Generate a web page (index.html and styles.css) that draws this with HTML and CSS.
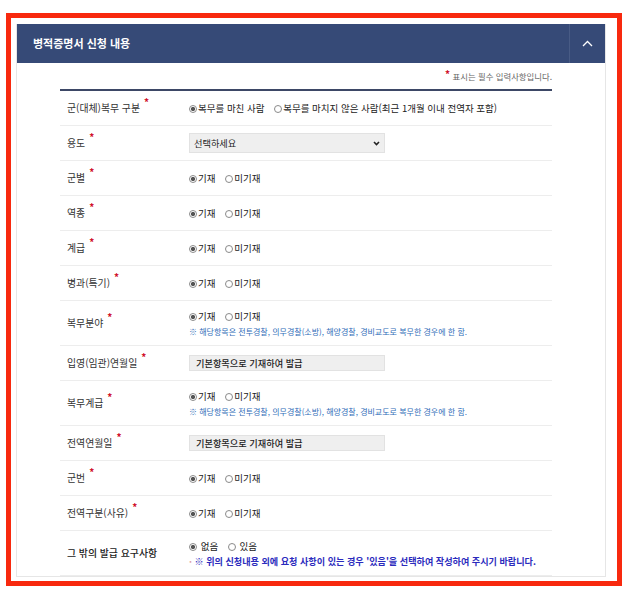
FILE: index.html
```html
<!DOCTYPE html>
<html lang="ko">
<head>
  <meta charset="UTF-8">
  <meta name="viewport" content="width=device-width, initial-scale=1.0">
  <title>병적증명서 신청 내용</title>
  <link rel="stylesheet" href="styles.css">
</head>
<body>
  <div class="frame">
    <section class="panel">
      <header class="panel-head">
        <h2>병적증명서 신청 내용</h2>
        <span class="toggle">
          <svg width="11" height="7" viewBox="0 0 11 7"><polyline points="1,6 5.5,1.5 10,6" fill="none" stroke="#fff" stroke-width="1.3"/></svg>
        </span>
      </header>

      <div class="panel-body">
        <p class="legend"><span class="req">*</span> 표시는 필수 입력사항입니다.</p>

        <div class="form">
          <div class="row">
            <div class="label">군(대체)복무 구분<span class="req">*</span></div>
            <div class="value">
              <span class="opt"><i class="radio on"></i>복무를 마친 사람</span>
              <span class="opt"><i class="radio"></i>복무를 마치지 않은 사람(최근 1개월 이내 전역자 포함)</span>
            </div>
          </div>
          <div class="row">
            <div class="label">용도<span class="req">*</span></div>
            <div class="value">
              <div class="select">
                <span>선택하세요</span>
                <svg width="7" height="5" viewBox="0 0 7 5"><polyline points="1,1 3.5,3.5 6,1" fill="none" stroke="#222" stroke-width="1.6"/></svg>
              </div>
            </div>
          </div>
          <div class="row">
            <div class="label">군별<span class="req">*</span></div>
            <div class="value">
              <span class="opt"><i class="radio on"></i>기재</span>
              <span class="opt"><i class="radio"></i>미기재</span>
            </div>
          </div>
          <div class="row">
            <div class="label">역종<span class="req">*</span></div>
            <div class="value">
              <span class="opt"><i class="radio on"></i>기재</span>
              <span class="opt"><i class="radio"></i>미기재</span>
            </div>
          </div>
          <div class="row">
            <div class="label">계급<span class="req">*</span></div>
            <div class="value">
              <span class="opt"><i class="radio on"></i>기재</span>
              <span class="opt"><i class="radio"></i>미기재</span>
            </div>
          </div>
          <div class="row">
            <div class="label">병과(특기)<span class="req">*</span></div>
            <div class="value">
              <span class="opt"><i class="radio on"></i>기재</span>
              <span class="opt"><i class="radio"></i>미기재</span>
            </div>
          </div>
          <div class="row">
            <div class="label">복무분야<span class="req">*</span></div>
            <div class="value">
              <span class="opt"><i class="radio on"></i>기재</span>
              <span class="opt"><i class="radio"></i>미기재</span>
              <p class="note">※ 해당항목은 전투경찰, 의무경찰(소방), 해양경찰, 경비교도로 복무한 경우에 한 함.</p>
            </div>
          </div>
          <div class="row">
            <div class="label">입영(임관)연월일<span class="req">*</span></div>
            <div class="value">
              <div class="field">기본항목으로 기재하여 발급</div>
            </div>
          </div>
          <div class="row">
            <div class="label">복무계급<span class="req">*</span></div>
            <div class="value">
              <span class="opt"><i class="radio on"></i>기재</span>
              <span class="opt"><i class="radio"></i>미기재</span>
              <p class="note">※ 해당항목은 전투경찰, 의무경찰(소방), 해양경찰, 경비교도로 복무한 경우에 한 함.</p>
            </div>
          </div>
          <div class="row">
            <div class="label">전역연월일<span class="req">*</span></div>
            <div class="value">
              <div class="field">기본항목으로 기재하여 발급</div>
            </div>
          </div>
          <div class="row">
            <div class="label">군번<span class="req">*</span></div>
            <div class="value">
              <span class="opt"><i class="radio on"></i>기재</span>
              <span class="opt"><i class="radio"></i>미기재</span>
            </div>
          </div>
          <div class="row">
            <div class="label">전역구분(사유)<span class="req">*</span></div>
            <div class="value">
              <span class="opt"><i class="radio on"></i>기재</span>
              <span class="opt"><i class="radio"></i>미기재</span>
            </div>
          </div>
          <div class="row">
            <div class="label strong">그 밖의 발급 요구사항</div>
            <div class="value">
              <span class="opt"><i class="radio on"></i> 없음</span>
              <span class="opt"><i class="radio"></i> 있음</span>
              <p class="note notice"><span class="dot">·</span> ※ 위의 신청내용 외에 요청 사항이 있는 경우 '있음'을 선택하여 작성하여 주시기 바랍니다.</p>
            </div>
          </div>
        </div>
      </div>
    </section>
  </div>
</body>
</html>
```

FILE: styles.css
```css
* {
  margin: 0;
  padding: 0;
  box-sizing: border-box;
}
body {
  background: #fff;
  font-family: "Noto Sans CJK KR", "Noto Sans", sans-serif;
  color: #333;
}
/* red highlight box around the panel */
.frame {
  width: 616px;
  height: 573px;
  margin: 13px 0 0 6px;
  border: 5px solid #f8290e;
  padding: 6px 0 0 5px;
  overflow: hidden;
}
.panel {
  width: 590px;
  border: 1px solid #e6e6e6;
  border-top: 0;
}
.panel-head {
  display: flex;
  height: 39px;
  background: #364a77;
}
.panel-head h2 {
  flex: 1;
  padding-left: 16px;
  font-size: 11px;
  line-height: 39px;
  font-weight: bold;
  color: #fff;
}
.toggle {
  width: 36px;
  display: flex;
  align-items: center;
  justify-content: center;
  border-left: 1px solid #485b85;
}
.panel-body {
  padding: 7px 53px 0 43px;
}
.legend {
  text-align: right;
  font-size: 8.4px;
  line-height: 12px;
  color: #666;
  margin-bottom: 7px;
}
.req {
  color: #d0112b;
  font-size: 10px;
  font-weight: bold;
  vertical-align: 6px;
  margin-left: 4px;
  line-height: 0;
}
.legend .req {
  margin-left: 0;
  vertical-align: 2px;
}
.form {
  border-top: 2px solid #3d4866;
}
.row {
  display: grid;
  grid-template-columns: 129px 1fr;
  align-items: center;
  min-height: 35px;
  border-bottom: 1px solid #ededed;
}
.label {
  padding-left: 7px;
  font-size: 9.9px;
  color: #333;
}
.label.strong {
  color: #222;
  font-weight: 500;
}
.value {
  padding: 7px 0;
  font-size: 9.5px;
  line-height: 16px;
  color: #222;
}
.opt + .opt {
  margin-left: 7px;
}
.radio {
  display: inline-block;
  width: 8px;
  height: 8px;
  margin-right: 1px;
  border: 1px solid #8a8a8a;
  border-radius: 50%;
  vertical-align: -1px;
}
.radio.on {
  background: radial-gradient(circle, #555 0 1.8px, #fff 2.4px);
}
.note {
  margin-top: 1px;
  font-size: 8px;
  line-height: 13px;
  color: #2f6cb8;
}
.note.notice {
  font-size: 9.1px;
  font-weight: bold;
  color: #2b2bbd;
}
.dot {
  color: #e0a0a8;
}
.select,
.field {
  width: 196px;
  display: flex;
  align-items: center;
  background: #efefef;
  border: 1px solid #e2e2e2;
}
.select {
  height: 20px;
  justify-content: space-between;
  padding: 0 4px 0 4px;
  font-size: 9.2px;
}
.field {
  height: 16px;
  padding-left: 6px;
  font-size: 9.2px;
  font-weight: 500;
  color: #222;
}
```
